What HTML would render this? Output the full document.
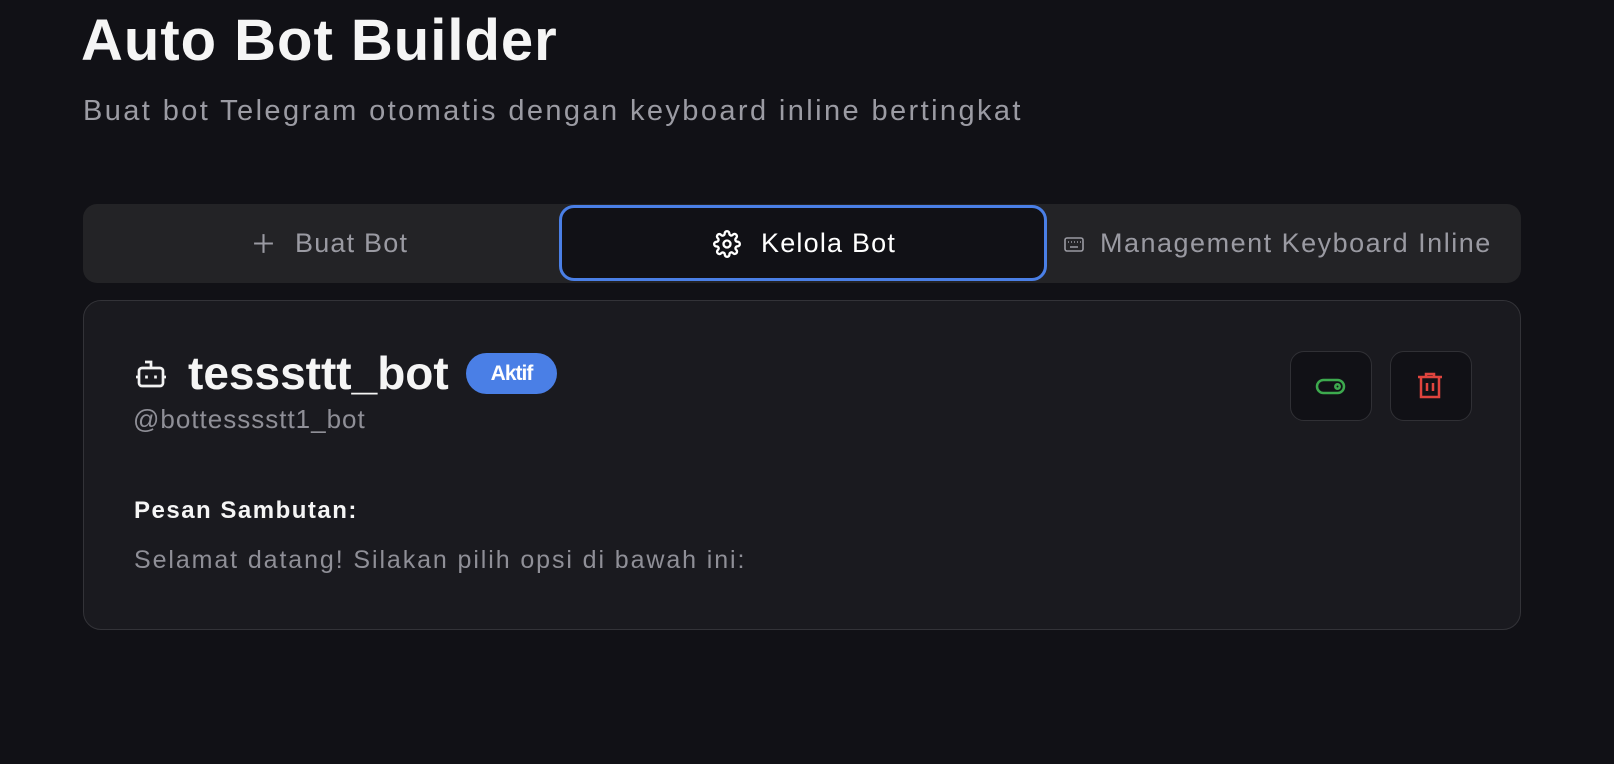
<!DOCTYPE html>
<html><head><style>
body{margin:0;background:#111116;width:1614px;height:764px;overflow:hidden;font-family:"Liberation Sans",sans-serif;position:relative}
.a{position:absolute;white-space:nowrap}
</style></head><body>
<div class="a" style="left:81px;top:7px;font-size:58px;font-weight:bold;color:#f5f5f5;letter-spacing:1px">Auto Bot Builder</div>
<div class="a" style="left:83px;top:95px;font-size:29px;color:#9b9ba3;letter-spacing:2.4px">Buat bot Telegram otomatis dengan keyboard inline bertingkat</div>

<div class="a" style="left:83px;top:204px;width:1438px;height:79px;background:#232326;border-radius:14px"></div>
<div class="a" style="left:252px;top:228px;font-size:27px;color:#9a9aa2;display:flex;align-items:center;gap:20px;letter-spacing:1.2px">
<svg width="23" height="23" viewBox="0 0 22 22" stroke="#9a9aa2" stroke-width="2"><path d="M11 2v18M2 11h18"/></svg>Buat Bot</div>
<div class="a" style="left:559px;top:205px;width:482px;height:70px;border:3px solid #4a7fe6;border-radius:15px;background:#111116"></div>
<div class="a" style="left:713px;top:228px;font-size:27px;color:#fff;display:flex;align-items:center;gap:20px;letter-spacing:1.2px">
<svg width="28" height="28" viewBox="0 0 24 24" fill="none" stroke="#fff" stroke-width="2"><circle cx="12" cy="12" r="3"/><path d="M19.4 15a1.7 1.7 0 0 0 .3 1.8l.1.1a2 2 0 1 1-2.8 2.8l-.1-.1a1.7 1.7 0 0 0-1.8-.3 1.7 1.7 0 0 0-1 1.5V21a2 2 0 1 1-4 0v-.1a1.7 1.7 0 0 0-1.1-1.5 1.7 1.7 0 0 0-1.8.3l-.1.1a2 2 0 1 1-2.8-2.8l.1-.1a1.7 1.7 0 0 0 .3-1.8 1.7 1.7 0 0 0-1.5-1H3a2 2 0 1 1 0-4h.1a1.7 1.7 0 0 0 1.5-1.1 1.7 1.7 0 0 0-.3-1.8l-.1-.1a2 2 0 1 1 2.8-2.8l.1.1a1.7 1.7 0 0 0 1.8.3H9a1.7 1.7 0 0 0 1-1.5V3a2 2 0 1 1 4 0v.1a1.7 1.7 0 0 0 1 1.5 1.7 1.7 0 0 0 1.8-.3l.1-.1a2 2 0 1 1 2.8 2.8l-.1.1a1.7 1.7 0 0 0-.3 1.8V9a1.7 1.7 0 0 0 1.5 1H21a2 2 0 1 1 0 4h-.1a1.7 1.7 0 0 0-1.5 1z"/></svg>Kelola Bot</div>
<div class="a" style="left:1064px;top:228px;font-size:27px;color:#9a9aa2;display:flex;align-items:center;gap:16px;letter-spacing:1.5px">
<svg width="20" height="16" viewBox="0 0 20 16" fill="none" stroke="#9a9aa2" stroke-width="1.6"><rect x="1" y="2" width="18" height="13" rx="2"/><path d="M4 6h1M7 6h1M10 6h1M13 6h1M16 6h1M6 11h8" /></svg>Management Keyboard Inline</div>

<div class="a" style="left:83px;top:300px;width:1436px;height:328px;border:1.5px solid #333338;border-radius:18px;background:#1a1a1f"></div>
<svg class="a" style="left:133px;top:356px" width="36" height="36" viewBox="0 0 24 24" fill="none" stroke="#f2f2f2" stroke-width="1.8"><path d="M12 8V4H8"/><rect x="4" y="8" width="16" height="12" rx="2"/><path d="M2 14h2M20 14h2M15 13v2M9 13v2"/></svg>
<div class="a" style="left:188px;top:346px;font-size:46px;font-weight:bold;color:#f5f5f5">tesssttt_bot</div>
<div class="a" style="left:466px;top:353px;width:91px;height:41px;border-radius:21px;background:#4a7fe6;color:#fff;font-weight:bold;font-size:21px;line-height:41px;text-align:center;letter-spacing:-1px">Aktif</div>
<div class="a" style="left:133px;top:404px;font-size:26px;color:#8f8f97;letter-spacing:1px">@bottesssstt1_bot</div>
<div class="a" style="left:1290px;top:351px;width:80px;height:68px;border:1.5px solid #303035;border-radius:14px;background:#111116"></div>
<svg class="a" style="left:1314px;top:372px" width="32" height="28" viewBox="0 0 32 28" fill="none" stroke="#3daa4e" stroke-width="2.5"><rect x="3" y="8" width="27" height="13" rx="6.5"/><circle cx="23.5" cy="14.5" r="2.2"/></svg>
<div class="a" style="left:1390px;top:351px;width:80px;height:68px;border:1.5px solid #303035;border-radius:14px;background:#111116"></div>
<svg class="a" style="left:1416px;top:371px" width="28" height="30" viewBox="0 0 28 30" fill="none" stroke="#e0443e" stroke-width="2.5"><path d="M2 6h24M10 6V3h8v3M5 6v20h18V6M11 12v8M17 12v8"/></svg>
<div class="a" style="left:134px;top:497px;font-size:24px;font-weight:bold;color:#f5f5f5;letter-spacing:1.5px">Pesan Sambutan:</div>
<div class="a" style="left:134px;top:546px;font-size:25px;color:#8f8f97;letter-spacing:1.9px">Selamat datang! Silakan pilih opsi di bawah ini:</div>
</body></html>
